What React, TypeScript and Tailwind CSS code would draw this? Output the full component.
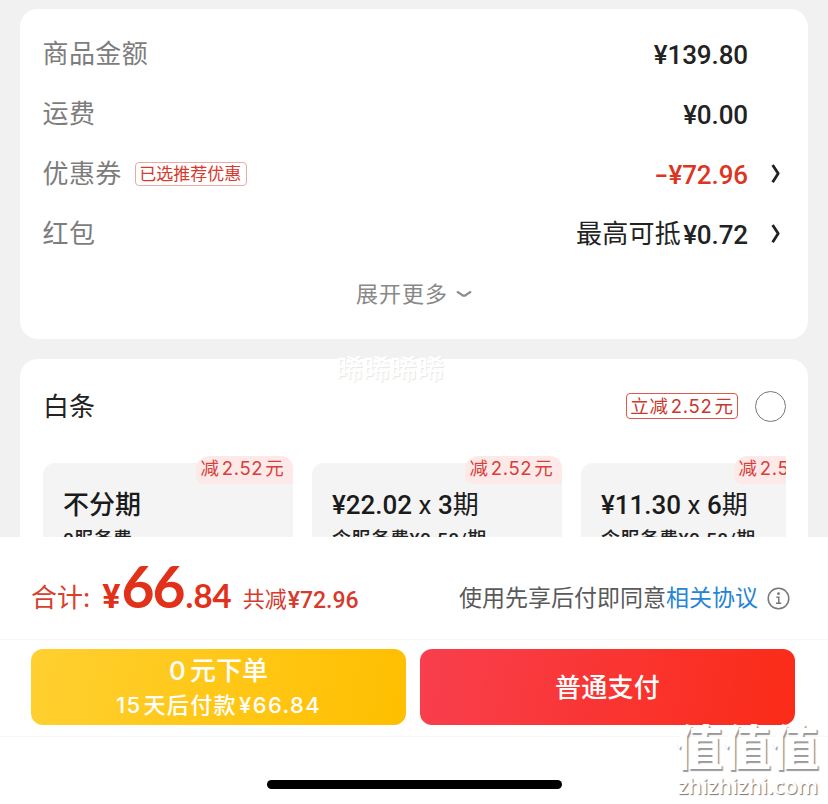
import type { ReactNode } from "react";

const num = "font-['Roboto','Noto_Sans_CJK_SC',sans-serif]";

function Chevron() {
  return (
    <svg className="ml-[23px] h-5 w-[10px]" viewBox="0 0 10 20" fill="none" stroke="#222" strokeWidth="2.8">
      <path d="M1.6 1 L7.2 9.6 L1.6 18.2" strokeLinejoin="round" />
    </svg>
  );
}

function Row({ label, tag, arrow, children }: { label: string; tag?: string; arrow?: boolean; children: ReactNode }) {
  return (
    <div className="flex h-[60px] items-center">
      <span className="-ml-[0.5px] pb-[4px] text-[26px] leading-[56px] tracking-[0.4px] text-[#7d7d7d]">{label}</span>
      {tag && (
        <span className="ml-[13px] flex h-6 w-[112px] items-center justify-center rounded-[4px] border border-[#eda9a3] pr-px pb-[4px] text-[17px] leading-none text-[#d63a2c]">
          {tag}
        </span>
      )}
      <div className={"ml-auto flex items-center " + (arrow ? "" : "pr-[33px]")}>
        {children}
        {arrow && <Chevron />}
      </div>
    </div>
  );
}

function Amount({ children, red }: { children: ReactNode; red?: boolean }) {
  return (
    <span className={`${num} pt-[2px] text-[26px] leading-[58px] font-medium tracking-[-0.1px] ${red ? "text-[#dc3522]" : "text-[#222]"}`}>
      {children}
    </span>
  );
}

function Plan({ children, fee }: { children: ReactNode; fee: string }) {
  return (
    <div className="relative h-[110px] w-[250px] shrink-0 rounded-[12px] bg-[#f4f4f4] pl-[20px]">
      <span className="absolute -top-[7px] right-0 flex h-7 w-[97px] items-center justify-center rounded-tl-[14px] rounded-tr-[12px] rounded-bl-[8px] bg-[#fdeae8] pr-1 pb-[2px] font-['Inter','Noto_Sans_CJK_SC',sans-serif] text-[18.5px] tracking-[0.7px] whitespace-nowrap text-[#d5403b]">
        减<span className="mx-[2px]">2.52</span>元
      </span>
      <div className={`${num} flex h-[83px] items-center text-[26px] leading-none font-medium whitespace-pre text-[#1b1b1b]`}>
        {children}
      </div>
      <div className={`${num} -mt-[18px] text-[19px] leading-[24px] font-medium tracking-[0.4px] whitespace-nowrap text-[#222]`}>{fee}</div>
    </div>
  );
}

export default function App() {
  return (
    <div className="relative flex h-[804px] w-[828px] flex-col overflow-hidden bg-[#f1f1f1] font-['Noto_Sans_CJK_SC',sans-serif]">
      <div className="h-[537px] overflow-hidden px-5 pt-[9px]">
        <section className="h-[330px] rounded-[18px] bg-white pt-[15px] pr-[27px] pl-[23px]">
          <Row label="商品金额"><Amount>¥139.80</Amount></Row>
          <Row label="运费"><Amount>¥0.00</Amount></Row>
          <Row label="优惠券" tag="已选推荐优惠" arrow>
            <Amount red><span className="mr-px inline-block origin-right scale-x-[1.5]">-</span>¥72.96</Amount>
          </Row>
          <Row label="红包" arrow>
            <span className="mr-[2px] pb-[4px] text-[26px] leading-[56px] tracking-[0.3px] text-[#222]">最高可抵</span>
            <Amount>¥0.72</Amount>
          </Row>
          <div className="flex h-[60px] items-center pl-[313px] text-[22px] tracking-[1px] text-[#888]">
            <span className="pb-[3px]">展开更多</span>
            <svg className="ml-[8px] h-[8px] w-4" viewBox="0 0 16 8" fill="none" stroke="#888" strokeWidth="2.2">
              <path d="M1 1.6 L6.4 5.2 Q8 6.2 9.6 5.2 L15 1.6" />
            </svg>
          </div>
        </section>

        <section className="mt-5 h-[260px] rounded-t-[18px] bg-white pr-[22px] pl-[23px]">
          <div className="flex h-[94px] items-center">
            <span className="pb-[2px] text-[26px] leading-none text-[#222]">白条</span>
            <span className="ml-auto flex h-[26px] w-[112px] items-center justify-center rounded-[4px] border border-[#e0574c] font-['Inter','Noto_Sans_CJK_SC',sans-serif] text-[18.5px] leading-none tracking-[0.7px] text-[#c9382e]">
              立减<span className="mx-[2px]">2.52</span>元
            </span>
            <span className="ml-[17px] h-[31px] w-[31px] rounded-full border border-[#777]" />
          </div>
          <div className="flex gap-[19px] overflow-hidden pt-[10px]">
            <Plan fee="0服务费">不分期</Plan>
            <Plan fee="含服务费¥0.58/期">¥22.02 <span className="font-normal">x</span> 3<span className="font-normal">期</span></Plan>
            <Plan fee="含服务费¥0.58/期">¥11.30 <span className="font-normal">x</span> 6<span className="font-normal">期</span></Plan>
          </div>
        </section>
      </div>

      <footer className="h-[267px] bg-white">
        <div className="flex h-[103px] justify-between border-b border-[#f8f8f8] pr-[38px] pl-[31px]">
          <div className="flex items-baseline leading-[99px]">
            <span className="-translate-y-px text-[26px] text-[#d8402b]">合计:</span>
            <span className={`${num} ml-[12px] text-[34px] font-bold text-[#e2311a]`}>¥</span>
            <span className="ml-px font-['Lato',sans-serif] text-[57px] font-bold tracking-[-2px] text-[#e2311a]">66</span>
            <span className="ml-[2px] font-['Lato',sans-serif] text-[33px] font-bold text-[#e2311a]">.84</span>
            <span className="ml-[11px] -translate-y-px text-[22px] text-[#d63a2c]">共减</span>
            <span className={`${num} ml-px text-[23px] font-medium text-[#d63a2c]`}>¥72.96</span>
          </div>
          <div className="flex items-center pt-[16px] text-[23px] leading-none">
            <span className="text-[#5a5a5a]">使用先享后付即同意</span>
            <span className="text-[#2484d6]">相关协议</span>
            <svg className="mt-1 ml-[9px] h-[23px] w-[23px]" viewBox="0 0 23 23" fill="none" stroke="#777" strokeWidth="1.5">
              <circle cx="11.5" cy="11.5" r="10.3" />
              <circle cx="11.5" cy="6.7" r="1.4" fill="#777" stroke="none" />
              <path d="M9.4 10.2 H11.8 V16 M9 16.3 H14.2" />
            </svg>
          </div>
        </div>
        <div className="flex h-[97px] gap-[14px] border-b border-[#f8f8f8] pt-[9px] pl-[31px]">
          <button className="flex h-[76px] w-[375px] flex-col items-center rounded-[12px] bg-linear-[100deg,#ffd030,#ffbf00] pt-[3px] text-white">
            <span className="font-['Inter','Noto_Sans_CJK_SC',sans-serif] text-[26px] leading-[38px] font-medium">0<span className="ml-[4px]">元下单</span></span>
            <span className="font-['Inter','Noto_Sans_CJK_SC',sans-serif] text-[22px] leading-[31px] font-medium tracking-[1.4px]">15<span className="mx-[2px]">天后付款</span>¥66.84</span>
          </button>
          <button className="flex h-[76px] w-[375px] items-center justify-center rounded-[12px] bg-linear-[100deg,#f83f4e,#fb2b17] pb-[3px] text-[26px] font-medium tracking-[0.3px] text-white">
            普通支付
          </button>
        </div>
        <div className="mt-[43px] ml-[267px] h-[9px] w-[295px] rounded-full bg-black" />
      </footer>

      <div className="absolute top-[352px] left-[336px] text-[27px] leading-[32px] font-medium text-white [text-shadow:1px_1px_1px_#e6e6e6]">晞晞晞晞</div>
      <div className="absolute top-[722px] left-[675px] text-[48px] leading-[44px] font-bold text-white [text-shadow:1.5px_1.5px_1px_#999]">值值值</div>
      <div className="absolute top-[775px] left-[678px] font-['Open_Sans',sans-serif] text-[21.5px] leading-[22px] font-semibold text-white [text-shadow:1px_1px_1px_#777]">zhizhizhi.com</div>
    </div>
  );
}
